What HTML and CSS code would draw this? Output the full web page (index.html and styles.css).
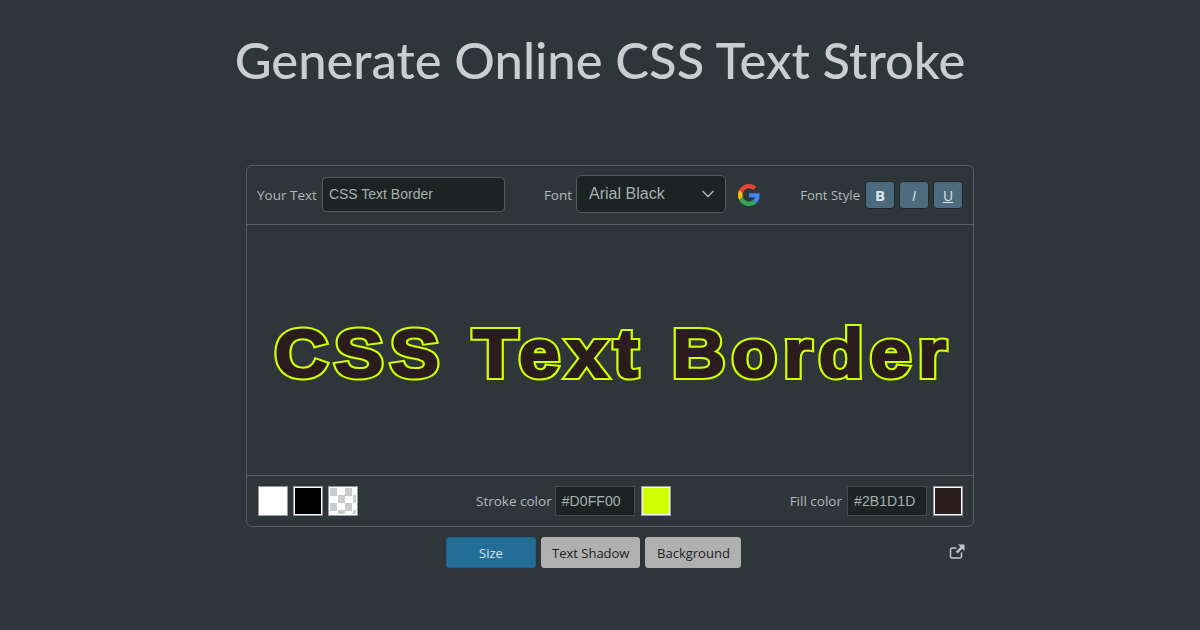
FILE: index.html
```html
<!DOCTYPE html>
<html lang="en">
<head>
<meta charset="utf-8">
<title>Generate Online CSS Text Stroke</title>
<link rel="stylesheet" href="styles.css">
</head>
<body>
<h1 class="title">Generate Online CSS Text Stroke</h1>
<div class="layout">
<main class="card">
  <div class="toolbar">
    <label class="field field-text"><span class="label">Your Text</span><input class="text-input" value="CSS Text Border"></label>
    <div class="field field-font">
      <span class="label">Font</span>
      <div class="select"><span>Arial Black</span>
        <svg class="chev" viewBox="0 0 16 16" width="16" height="16"><path d="M3 5.500l5 5 5-5" fill="none" stroke="#a9b0b3" stroke-width="1.600" stroke-linecap="round" stroke-linejoin="round"/></svg>
      </div>
      <svg class="google" viewBox="0 0 48 48" width="22" height="22">
        <path fill="#EA4335" d="M24 9.500c3.500 0 6.700 1.200 9.200 3.600l6.900-6.900C35.900 2.400 30.500 0 24 0 14.600 0 6.500 5.400 2.600 13.200l8 6.200C12.500 13.700 17.800 9.500 24 9.500z"/>
        <path fill="#4285F4" d="M47 24.500c0-1.600-.1-3.100-.4-4.500H24v9h12.900c-.6 3-2.200 5.500-4.700 7.200l7.700 6c4.500-4.200 7.100-10.300 7.100-17.700z"/>
        <path fill="#FBBC05" d="M10.500 28.600c-.5-1.500-.8-3-.8-4.600s.3-3.100.8-4.600l-8-6.200C.900 16.400 0 20.100 0 24s.9 7.600 2.600 10.800l7.900-6.200z"/>
        <path fill="#34A853" d="M24 48c6.500 0 11.900-2.100 15.900-5.800l-7.700-6c-2.200 1.500-4.900 2.300-8.200 2.300-6.200 0-11.500-4.200-13.400-9.900l-8 6.200C6.500 42.600 14.600 48 24 48z"/>
      </svg>
    </div>
    <div class="field field-style">
      <span class="label label-style">Font Style</span>
      <button class="style-btn bold">B</button>
      <button class="style-btn italic">I</button>
      <button class="style-btn under">U</button>
    </div>
  </div>
  <div class="preview"><span class="stroke-text" data-text="CSS Text Border">CSS Text Border</span></div>
  <div class="colors">
    <div class="swatches">
      <span class="swatch white"></span>
      <span class="swatch black"></span>
      <span class="swatch checker"></span>
    </div>
    <div class="color-group stroke-group">
      <span class="label">Stroke color</span>
      <span class="hex">#D0FF00</span>
      <span class="swatch lime"></span>
    </div>
    <div class="color-group fill-group">
      <span class="label">Fill color</span>
      <span class="hex">#2B1D1D</span>
      <span class="swatch fill"></span>
    </div>
  </div>
</main>
<nav class="tabs">
  <button class="tab active">Size</button>
  <button class="tab">Text Shadow</button>
  <button class="tab tab-bg">Background</button>
  <a class="share" aria-label="Open in new window">
    <svg viewBox="0 0 16 16" width="16" height="16"><path d="M12.500 9v3.500a1.500 1.500 0 0 1-1.500 1.500H3a1.500 1.500 0 0 1-1.500-1.500V5.500A1.500 1.500 0 0 1 3 4h4" fill="none" stroke="#c3c7c9" stroke-width="1.500" stroke-linecap="round"/><path d="M9 0.500h6.500v6.500l-2.300-2.300-4.700 4.700-1.700-1.700 4.700-4.700z" fill="#c3c7c9"/></svg>
  </a>
</nav>
</div>
</body>
</html>
```
FILE: styles.css
```css
* { box-sizing: border-box; }
html, body { height: 100%; }
body {
  margin: 0;
  background: #2f3639;
  font-family: "Open Sans", "Noto Sans", sans-serif;
  color: #b4babd;
  overflow: hidden;
}
.title {
  margin: 0;
  padding-top: 29px;
  height: 165px;
  text-align: center;
  font-family: Lato, sans-serif;
  font-weight: 500;
  font-size: 50.7px;
  line-height: 62px;
  color: #cbcdce;
}
.layout { padding-left: 20px; }
.card {
  width: 728px;
  height: 362px;
  margin: 0 auto;
  border: 1px solid #585e61;
  border-radius: 6px;
  display: flex;
  flex-direction: column;
}
.toolbar {
  height: 59px;
  flex: none;
  display: flex;
  align-items: center;
  padding: 0 10px;
  border-bottom: 1px solid #585e61;
}
.field { display: flex; align-items: center; }
.label { font-size: 13.5px; white-space: nowrap; color: #b2b8bb; }
.label-style { font-size: 13.1px; }
.field-text { gap: 5px; }
.text-input {
  width: 183px;
  height: 35px;
  padding: 0 6px;
  margin-top: -2px;
  background: #1c2323;
  border: 1px solid #555b5d;
  border-radius: 4px;
  color: #a8aeb0;
  font: 14px "Liberation Sans", Arial, sans-serif;
}
.field-font { margin-left: 39px; gap: 4px; }
.select {
  width: 150px;
  height: 38px;
  padding: 0 12px;
  background: #1c2323;
  border: 1px solid #555b5d;
  border-radius: 5px;
  display: flex;
  align-items: center;
  justify-content: space-between;
  font: 16px "Liberation Sans", Arial, sans-serif;
  color: #a8aeb0;
  margin-top: -2px;
}
.chev { margin-right: -3px; }
.google { margin-left: 8px; }
.field-style { margin-left: auto; gap: 4px; }
.field-style .label { margin-right: 1px; }
.style-btn {
  width: 30px;
  height: 28px;
  padding: 0;
  background: #4c6b7f;
  border: 1px solid #20272a;
  border-radius: 4px;
  color: #dfe5e8;
  font: 14px "Open Sans", sans-serif;
}
.bold { font-weight: 700; font-size: 15px; }
.italic { font-style: italic; }
.under { text-decoration: underline; }
.preview {
  flex: 1;
  display: flex;
  align-items: center;
  justify-content: center;
  overflow: hidden;
  padding: 6px 0 0 8px;
}
.stroke-text {
  position: relative;
  font-family: "Liberation Sans", Arial, sans-serif;
  font-weight: 700;
  font-size: 68px;
  letter-spacing: 6px;
  white-space: nowrap;
  color: #2b1d1d;
  -webkit-text-stroke: 6px #d0ff00;
  transform: scaleX(1.085);
}
.stroke-text::after {
  content: attr(data-text);
  position: absolute;
  left: 0;
  top: 0;
  -webkit-text-stroke: 2px #2b1d1d;
}
.colors {
  height: 51px;
  flex: none;
  display: flex;
  align-items: center;
  padding: 0 10px 0 11px;
  border-top: 1px solid #585e61;
}
.swatches { display: flex; gap: 5px; }
.swatch {
  display: block;
  width: 30px;
  height: 30px;
  border: 1px solid #93989a;
  box-shadow: inset 0 0 0 1px #fff;
  flex: none;
}
.white { background: #fff; }
.black { background: #000; }
.checker {
  background-color: #fff;
  background-image: conic-gradient(#fff 25%, #ccc 0 50%, #fff 0 75%, #ccc 0);
  background-size: 15px 15px;
  background-position: 1px 1px;
}
.lime { background: #d0ff00; }
.fill { background: #2b1d1d; }
.color-group { display: flex; align-items: center; gap: 4px; }
.stroke-group { margin-left: 118px; margin-right: auto; gap: 3px; }
.stroke-group .swatch { margin-left: 3px; }
.fill-group { gap: 5px; }
.fill-group .swatch { margin-left: 1px; }
.hex {
  width: 80px;
  height: 30px;
  padding: 0 6px;
  background: #1c2323;
  border: 1px solid #454b4d;
  font: 14px/28px "Liberation Sans", Arial, sans-serif;
  letter-spacing: .1px;
  color: #a9afb1;
}
.tabs {
  width: 728px;
  margin: 10px auto 0;
  display: flex;
  align-items: flex-start;
  gap: 5px;
  padding-left: 200px;
}
.tab {
  height: 31px;
  padding: 0 10px;
  border: 1px solid #b0b0b0;
  border-radius: 3px;
  background: #b0b0b0;
  color: #1c1c24;
  font: 13px "Open Sans", sans-serif;
}
.tab-bg { width: 96px; padding: 0; }
.tab.active {
  width: 90px;
  background: #236e96;
  border-color: #1f6488;
  color: #d8e4ea;
}
.share { margin-left: auto; margin-right: 9px; margin-top: 7px; display: block; height: 16px; }
.share svg { display: block; }
```
